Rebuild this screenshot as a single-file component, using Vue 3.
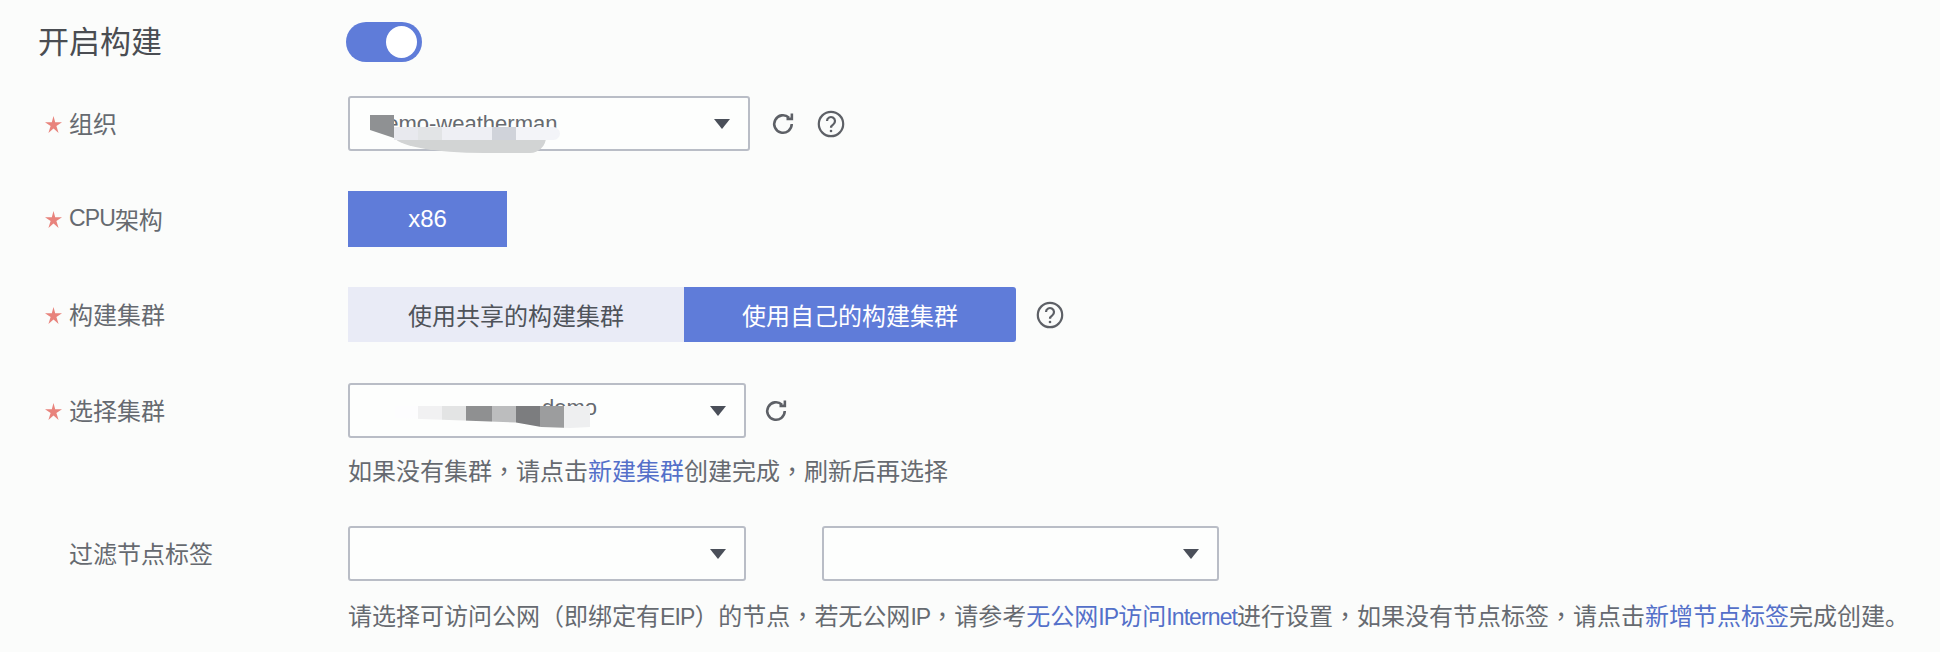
<template>
  <div class="page">
    <div class="row title-row">
      <div class="title">开启构建</div>
      <span class="toggle"><span class="knob"></span></span>
    </div>

    <div class="row org-row">
      <label class="label"><svg class="star" viewBox="0 0 20 20"><polygon points="10,0 12,7.300 20,7.400 13.400,11.800 16,20 10,14.800 4,20 6.600,11.800 0,7.400 8,7.300" /></svg>组织</label>
      <div class="select org">
        <span class="value">demo-weatherman</span>
        <span class="smudge org-band"></span>
        <span class="smudge org-dark"></span>
        <span class="smudge org-smudge"></span>
        <span class="arrow"></span>
      </div>
      <svg class="icon refresh" viewBox="0 0 24 24"><path d="M19.500 12a7.500 7.500 0 1 1-2.400-5.500M19.600 3v4.600H15" /></svg>
      <svg class="icon help" viewBox="0 0 28 28"><circle cx="14" cy="14" r="12.200" /><path d="M10 11a4 4 0 1 1 6.300 3.300c-1.500 1-2.300 1.700-2.300 3.400" /><circle class="dot" cx="14" cy="21" r="1.300" /></svg>
    </div>

    <div class="row cpu-row">
      <label class="label"><svg class="star" viewBox="0 0 20 20"><polygon points="10,0 12,7.300 20,7.400 13.400,11.800 16,20 10,14.800 4,20 6.600,11.800 0,7.400 8,7.300" /></svg><span class="latin">CPU</span>架构</label>
      <button class="seg-btn active single">x86</button>
    </div>

    <div class="row cluster-row">
      <label class="label"><svg class="star" viewBox="0 0 20 20"><polygon points="10,0 12,7.300 20,7.400 13.400,11.800 16,20 10,14.800 4,20 6.600,11.800 0,7.400 8,7.300" /></svg>构建集群</label>
      <div class="seg">
        <button class="seg-btn">使用共享的构建集群</button>
        <button class="seg-btn active">使用自己的构建集群</button>
      </div>
      <svg class="icon help seg-help" viewBox="0 0 28 28"><circle cx="14" cy="14" r="12.200" /><path d="M10 11a4 4 0 1 1 6.300 3.300c-1.500 1-2.300 1.700-2.300 3.400" /><circle class="dot" cx="14" cy="21" r="1.300" /></svg>
    </div>

    <div class="row pick-row">
      <label class="label"><svg class="star" viewBox="0 0 20 20"><polygon points="10,0 12,7.300 20,7.400 13.400,11.800 16,20 10,14.800 4,20 6.600,11.800 0,7.400 8,7.300" /></svg>选择集群</label>
      <div class="select pick">
        <span class="value cluster-value">demo</span>
        <span class="smudge cluster-smudge"></span>
        <span class="arrow"></span>
      </div>
      <svg class="icon refresh pick-refresh" viewBox="0 0 24 24"><path d="M19.500 12a7.500 7.500 0 1 1-2.400-5.500M19.600 3v4.600H15" /></svg>
    </div>
    <p class="hint">如果没有集群<span class="mark">，</span>请点击<a>新建集群</a>创建完成<span class="mark">，</span>刷新后再选择</p>

    <div class="row filter-row">
      <label class="label plain">过滤节点标签</label>
      <div class="select pick"><span class="arrow"></span></div>
      <div class="select second"><span class="arrow"></span></div>
    </div>
    <p class="hint last">请选择可访问公网（即绑定有<span class="latin">EIP</span>）的节点<span class="mark">，</span>若无公网<span class="latin">IP</span><span class="mark">，</span>请参考<a>无公网<span class="latin">IP</span>访问<span class="latin">Internet</span></a>进行设置<span class="mark">，</span>如果没有节点标签<span class="mark">，</span>请点击<a>新增节点标签</a>完成创建。</p>
  </div>
</template>

<script setup>
</script>

<style>
body {
  background: #fbfcfb;
}
</style>

<style scoped>
.page {
  height: 652px;
  padding: 22px 0 0 38px;
  box-sizing: border-box;
  overflow: hidden;
  font-family: "Liberation Sans", "Noto Sans CJK SC", sans-serif;
  font-size: 24px;
  color: #666a70;
}

.row {
  display: flex;
  align-items: center;
}

.title-row {
  height: 40px;
}
.title {
  width: 308px;
  padding-bottom: 6px;
  font-size: 31px;
  color: #4a4d52;
}
.toggle {
  display: flex;
  justify-content: flex-end;
  align-items: center;
  width: 76px;
  height: 40px;
  padding-right: 5px;
  box-sizing: border-box;
  border-radius: 20px;
  background: #5f7cd9;
}
.knob {
  width: 31px;
  height: 32px;
  border-radius: 50%;
  background: #fff;
}

.org-row {
  height: 55px;
  margin-top: 34px;
}
.cpu-row {
  height: 56px;
  margin-top: 40px;
}
.cluster-row {
  height: 55px;
  margin-top: 40px;
}
.pick-row {
  height: 55px;
  margin-top: 41px;
}
.filter-row {
  height: 55px;
  margin-top: 38px;
}

.label {
  display: flex;
  align-items: center;
  width: 310px;
  padding: 0 0 2px 7px;
  box-sizing: border-box;
}
.star {
  flex: none;
  width: 17px;
  height: 17px;
  margin: 3px 7px 0 0;
  fill: #e8837c;
}
.label.plain {
  padding-left: 31px;
}
.latin {
  font-size: 23px;
  letter-spacing: -0.9px;
}
.mark {
  font-family: "Noto Sans CJK TC", sans-serif;
}

.select {
  position: relative;
  display: flex;
  align-items: center;
  width: 402px;
  height: 55px;
  padding-left: 24px;
  box-sizing: border-box;
  border: 2px solid #b9bdc6;
  border-radius: 3px;
  background: #fdfefd;
}
.select.pick {
  width: 398px;
}
.select.second {
  width: 397px;
  margin-left: 76px;
}
.arrow {
  position: absolute;
  top: 21px;
  right: 18px;
  border-left: 8px solid transparent;
  border-right: 8px solid transparent;
  border-top: 10px solid #4a4f59;
}
.value {
  font-size: 22px;
}
.cluster-value {
  margin: 0 0 6px 168px;
}

/* values hidden by a rough brush in the original */
.smudge {
  position: absolute;
  display: block;
}
.org-dark {
  left: 20px;
  top: 17px;
  width: 24px;
  height: 23px;
  background: #8f9193;
  clip-path: polygon(0 0, 100% 0, 100% 100%, 0 65%);
}
.org-smudge {
  left: 44px;
  top: 29px;
  width: 166px;
  height: 13px;
  border-radius: 0 8px 8px 0;
  background: linear-gradient(90deg, #e8e9ee 0 24px, #e2e4e6 24px 48px, #eeeff4 48px 98px, #d0d3da 98px 122px, #f3f4f8 122px);
}
.org-band {
  left: 44px;
  top: 38px;
  width: 152px;
  height: 17px;
  border-radius: 0 0 16px 90px / 0 0 16px 17px;
  background: #d2d4d4;
}
.cluster-smudge {
  left: 45px;
  top: 21px;
  width: 195px;
  height: 22px;
  background: linear-gradient(90deg, #fdfdfe 0 23px, #f1f1f2 23px 47px, #e3e4e4 47px 71px, #8f9091 71px 97px, #bcbdbe 97px 121px, #7c7d7f 121px 145px, #9c9d9e 145px 169px, #eeeff0 169px);
  clip-path: polygon(0 0, 100% 0, 100% 95%, 90% 100%, 75% 95%, 62% 75%, 0 55%);
}

.icon {
  flex: none;
  fill: none;
  stroke: #5d6066;
  stroke-width: 2.2;
}
.icon .dot {
  fill: #5d6066;
  stroke: none;
}
.refresh {
  width: 28px;
  height: 28px;
  margin-left: 19px;
}
.pick-refresh {
  margin-left: 16px;
}
.help {
  width: 28px;
  height: 28px;
  margin-left: 20px;
}
.seg-help {
  margin-left: 20px;
}

.seg {
  display: flex;
}
.seg-btn {
  width: 336px;
  height: 55px;
  padding: 0;
  border: none;
  font: inherit;
  color: #4f535a;
  background: #e9ebf6;
}
.seg-btn.active {
  width: 332px;
  border-radius: 0 3px 3px 0;
  color: #fff;
  background: #5f7cd9;
}
.seg-btn.single {
  width: 159px;
  height: 56px;
  border-radius: 0;
}

.hint {
  margin: 15px 0 0 310px;
  line-height: 33px;
  white-space: nowrap;
}
.hint.last {
  margin-top: 17px;
}
.hint a {
  color: #5470c9;
}
</style>
